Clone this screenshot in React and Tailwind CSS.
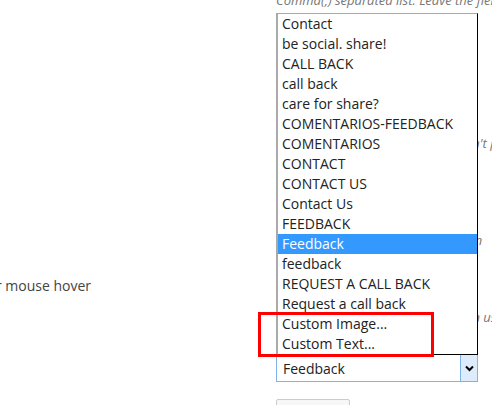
import React from "react";

const options = [
  "Contact",
  "be social. share!",
  "CALL BACK",
  "call back",
  "care for share?",
  "COMENTARIOS-FEEDBACK",
  "COMENTARIOS",
  "CONTACT",
  "CONTACT US",
  "Contact Us",
  "FEEDBACK",
  "Feedback",
  "feedback",
  "REQUEST A CALL BACK",
  "Request a call back",
  "Custom Image...",
  "Custom Text...",
];

const App = () => {
  const selected = "Feedback";

  return (
    <div
      className="relative w-[492px] h-[405px] overflow-hidden bg-white text-[#444]"
      style={{ fontFamily: '"Open Sans", "Liberation Sans", sans-serif' }}
    >
      {/* page behind the open list */}
      <div className="pl-[276px] -mt-[9px] text-[13px] leading-[18px] text-[#777] italic whitespace-nowrap">
        Comma(,) separated list. Leave the field empty for default
      </div>

      <div className="pl-[276px] mt-[125px] text-[13px] leading-[18px] italic text-[#777] whitespace-nowrap">
        Hide the icon on small screens. Don't panic
      </div>
      <div className="pl-[276px] mt-[79px] text-[13px] leading-[18px] italic text-[#777] whitespace-nowrap">
        Show the label text on hover, tap on
      </div>

      <div className="flex items-center mt-[26px] h-[20px]">
        <span className="w-[276px] shrink-0 -ml-[4px] text-[14px] text-[#444]">r mouse hover</span>
      </div>
      <div className="pl-[276px] mt-[13px] text-[13px] leading-[18px] italic text-[#777] whitespace-nowrap">
        Effect is applied to all the button on user hover
      </div>

      {/* closed select */}
      <div className="ml-[276px] mt-[28px] w-[202px] h-[28px] flex border border-[#7eb4ea] bg-white">
        <div className="flex-1 flex items-center pl-[6px] text-[14px] text-[#222]">
          {selected}
        </div>
        <div className="w-[17px] flex items-center justify-center bg-[#dcecfc] border-l border-[#7eb4ea]">
          <svg width="9" height="7" viewBox="0 0 9 7">
            <path d="M1 1.5 L4.5 5 L8 1.5" fill="none" stroke="#000" strokeWidth="2" />
          </svg>
        </div>
      </div>

      <div className="ml-[276px] mt-[17px] w-[74px] h-[20px] border border-[#ccc] rounded-[2px] bg-[#f7f7f7]" />

      {/* open list */}
      <ul className="absolute left-[276px] top-[13px] w-[202px] border-t border-l-2 border-[#a9a9a9] border-r border-b border-r-black border-b-black bg-white text-[14px] text-[#222]">
        {options.map((opt) => (
          <li
            key={opt}
            className={
              opt === selected
                ? "h-[20px] leading-[20px] pl-[4px] bg-[#3399ff] text-white"
                : "h-[20px] leading-[20px] pl-[4px]"
            }
          >
            {opt}
          </li>
        ))}
      </ul>

      {/* highlight box */}
      <div className="absolute left-[258px] top-[312px] w-[176px] h-[45px] border-[3px] border-[#ff0000]" />
    </div>
  );
};

export default App;
